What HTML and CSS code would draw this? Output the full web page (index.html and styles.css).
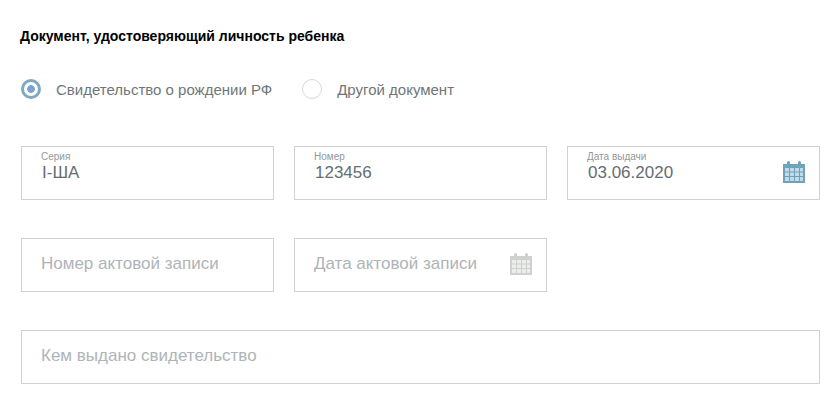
FILE: index.html
```html
<!DOCTYPE html>
<html lang="ru">

<head>
    <meta charset="UTF-8">
    <meta name="viewport" content="width=device-width, initial-scale=1.0">
    <title>Документ ребенка</title>
    <link rel="stylesheet" href="styles.css">
</head>

<body>
    <svg class="sprite" width="0" height="0">
        <symbol id="calendar" viewBox="0 0 22 22">
            <path d="M0 3h4V1.500a1 1 0 0 1 3 0V3h8V1.500a1 1 0 0 1 3 0V3h4v19H0z" fill="currentColor"/>
            <path d="M2 7h4v3.500H2zM7 7h4v3.500H7zM12 7h4v3.500h-4zM17 7h3v3.500h-3zM2 11.500h4V15H2zM7 11.500h4V15H7zM12 11.500h4V15h-4zM17 11.500h3V15h-3zM2 16h4v4H2zM7 16h4v4H7zM12 16h4v4h-4zM17 16h3v4h-3z" fill="#fff" opacity=".6"/>
        </symbol>
    </svg>

    <h1 class="title">Документ, удостоверяющий личность ребенка</h1>

    <div class="radios">
        <label class="radio radio-checked"><span class="radio-mark"></span>Свидетельство о рождении РФ</label>
        <label class="radio"><span class="radio-mark"></span>Другой документ</label>
    </div>

    <div class="form-grid">
        <div class="field">
            <span class="field-label">Серия</span>
            <span class="field-value">I-ША</span>
        </div>
        <div class="field">
            <span class="field-label">Номер</span>
            <span class="field-value">123456</span>
        </div>
        <div class="field field-date">
            <span class="field-label">Дата выдачи</span>
            <span class="field-value">03.06.2020</span>
            <svg class="cal-icon cal-active"><use href="#calendar"/></svg>
        </div>

        <div class="field field-empty">
            <span class="field-placeholder">Номер актовой записи</span>
        </div>
        <div class="field field-empty field-date">
            <span class="field-placeholder">Дата актовой записи</span>
            <svg class="cal-icon cal-muted"><use href="#calendar"/></svg>
        </div>
        <div></div>

        <div class="field field-empty field-wide">
            <span class="field-placeholder">Кем выдано свидетельство</span>
        </div>
    </div>
</body>

</html>
```
FILE: styles.css
```css
/* Base */
body, html {
    margin: 0;
    padding: 0;
    background: #fff;
    font-family: "Liberation Sans", Arial, sans-serif;
    overflow: hidden;
}

body {
    padding: 28px 20px 0 20px;
}

.sprite {
    display: none;
}

.title {
    margin: 0;
    font-size: 14px;
    line-height: 16px;
    font-weight: bold;
    color: #000;
}

/* Radios */
.radios {
    display: flex;
    gap: 30px;
    margin-top: 33px;
    height: 24px;
    padding-left: 1px;
}

.radio {
    display: flex;
    align-items: center;
    gap: 15px;
    font-size: 15px;
    color: #6f7679;
}

.radio-mark {
    box-sizing: border-box;
    width: 20px;
    height: 20px;
    border: 1px solid #d6d8d9;
    border-radius: 50%;
    background: #fff;
}

.radio-checked .radio-mark {
    border: 3px solid #7fa9c2;
    background: radial-gradient(circle, #7ba3d3 0 3.500px, #fff 4.200px);
}

/* Fields */
.form-grid {
    display: grid;
    grid-template-columns: repeat(3, 253px);
    grid-auto-rows: 54px;
    column-gap: 20px;
    row-gap: 38px;
    margin-top: 45px;
    margin-left: 1px;
}

.field {
    box-sizing: border-box;
    position: relative;
    display: flex;
    flex-direction: column;
    padding: 4px 19px 0;
    border: 1px solid #cfd1d2;
    background: #fff;
}

.field-wide {
    grid-column: 1 / -1;
}

.field-label {
    font-size: 10px;
    line-height: 11px;
    color: #92989b;
}

.field-value {
    font-size: 17px;
    line-height: 20px;
    margin: 1px 0 0 1px;
    color: #666d70;
}

.field-empty {
    justify-content: center;
    padding-top: 0;
    padding-bottom: 2px;
}

.field-placeholder {
    font-size: 17px;
    color: #aeb4b7;
}

/* Icone calendrier, par-dessus le champ */
.cal-icon {
    position: absolute;
    top: 14px;
    right: 14px;
    width: 22px;
    height: 22px;
}

.cal-active {
    color: #6ea3c0;
}

.cal-muted {
    color: #cfd1cf;
}
```
